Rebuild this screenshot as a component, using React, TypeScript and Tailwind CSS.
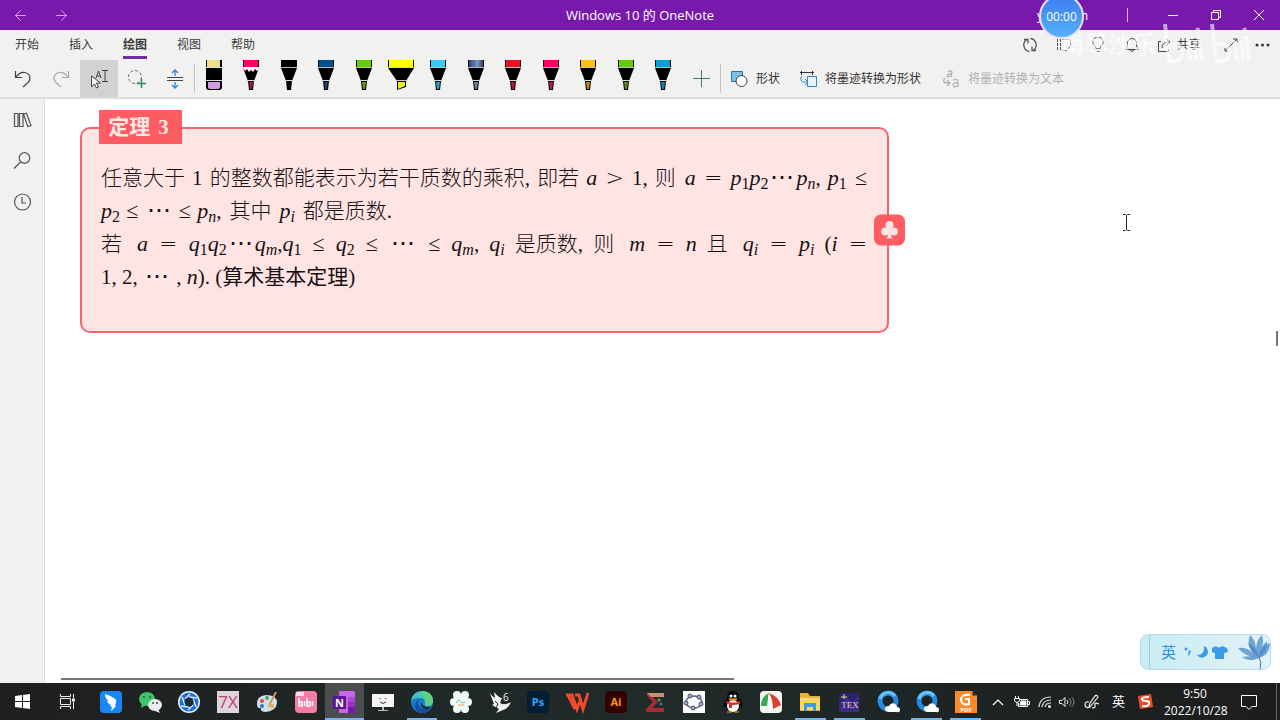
import type { ReactNode } from "react";
import clsx from "clsx";
import { ArrowLeft, ArrowRight } from "lucide-react";

const tabs = ["开始", "插入", "绘图", "视图", "帮助"];

interface Pen {
  name: string;
  color: string;
  tip: string;
  kind?: "eraser" | "pencil" | "highlighter" | "galaxy";
}

const pens: Pen[] = [
  { name: "橡皮擦", color: "#ecdf8c", tip: "#d59ae0", kind: "eraser" },
  { name: "铅笔", color: "#ff0062", tip: "#a5124a", kind: "pencil" },
  { name: "黑色笔", color: "#000000", tip: "#000000" },
  { name: "深蓝色笔", color: "#004e8c", tip: "#1c3f63" },
  { name: "绿色笔", color: "#66cc00", tip: "#5e9c14" },
  { name: "荧光笔", color: "#ffff00", tip: "#e8ec1a", kind: "highlighter" },
  { name: "浅蓝色笔", color: "#33ccff", tip: "#2f9fd0" },
  { name: "星系笔", color: "#4c6496", tip: "#5a8797", kind: "galaxy" },
  { name: "红色笔", color: "#e71224", tip: "#b81230" },
  { name: "粉色笔", color: "#ff0066", tip: "#c01555" },
  { name: "橙色笔", color: "#ffc114", tip: "#b88b18" },
  { name: "草绿色笔", color: "#66cc00", tip: "#5e8c14" },
  { name: "天蓝色笔", color: "#00a0d7", tip: "#167fa8" },
];

const PenIcon = ({ pen }: { pen: Pen }) => {
  if (pen.kind === "eraser") {
    return (
      <svg width="28" height="30" viewBox="0 0 28 30">
        <path d="M6 0h16v27q0 3-3 3H9q-3 0-3-3z" fill="#000" />
        <path d="M7 0h13v7H7z" fill={pen.color} />
        <path d="M6 7h16v1H6zM6 20h16v1H6z" fill="#ddd" />
        <path d="M8 22h12v5q0 2-2 2h-8q-2 0-2-2z" fill={pen.tip} />
      </svg>
    );
  }
  if (pen.kind === "highlighter") {
    return (
      <svg width="28" height="30" viewBox="0 0 28 30">
        <path d="M1 0h26v8l-8 13v6l-9 3v-9L1 8z" fill="#000" />
        <path d="M2 0h24v7H2z" fill={pen.color} />
        <path d="M1 7h26v1H1zM10 20h9v1h-9z" fill="#ccc" />
        <path d="M11 22h7v4l-7 3z" fill={pen.tip} />
      </svg>
    );
  }
  return (
    <svg width="28" height="30" viewBox="0 0 28 30">
      <defs>
        <linearGradient id="galaxy">
          <stop stopColor="#3c3c6c" />
          <stop offset="0.6" stopColor="#6d9cc9" />
          <stop offset="1" stopColor="#39425c" />
        </linearGradient>
      </defs>
      <path d="M6 0h16v8l-5 13-1 9h-4l-1-9L6 8z" fill="#000" />
      <path d="M7 0h14v7H7z" fill={pen.kind === "galaxy" ? "url(#galaxy)" : pen.color} />
      {pen.kind === "pencil" ? (
        <path d="M6 7h16v2l-2 2-2-2-2 3-2-2-2 2-2-3-2 2-2-3z" fill="#fff" />
      ) : (
        <path d="M6 7h16v1H6z" fill="#bbb" />
      )}
      <path d="M11 20h6v1h-6z" fill="#ddd" />
      <path d="M12 22h4l-1 7h-2z" fill={pen.tip} />
    </svg>
  );
};

const ToolButton = ({
  label,
  active,
  children,
}: {
  label: string;
  active?: boolean;
  children: ReactNode;
}) => (
  <button
    aria-label={label}
    className={clsx(
      "flex h-full w-[38px] shrink-0 items-center justify-center",
      active && "bg-[#d2d2d1]",
    )}
  >
    {children}
  </button>
);

const TitleBar = () => (
  <header className="relative grid h-[30px] shrink-0 grid-cols-[1fr_auto_1fr] items-center bg-[#7719aa] text-xs text-white">
    <div className="flex h-full items-center pl-3 text-[#e29bf5]">
      <button aria-label="后退" className="w-[41px]">
        <ArrowLeft size={17} strokeWidth={1.4} />
      </button>
      <button aria-label="前进">
        <ArrowRight size={17} strokeWidth={1.4} />
      </button>
    </div>
    <h1 className="pt-0.5 text-[13px]">Windows 10 的 OneNote</h1>
    <div className="flex h-full items-center justify-end">
      <span className="mr-[39px] flex w-[51px] justify-between pt-0.5">
        <span>y</span>
        <span>n</span>
      </span>
      <span className="mr-[23px] h-[14px] w-px bg-[#d9b3ea]" />
      <button aria-label="最小化" className="flex h-full w-[43px] items-center justify-center">
        <svg width="10" height="10" stroke="#fff">
          <path d="M0 5.5h10" />
        </svg>
      </button>
      <button aria-label="还原" className="flex h-full w-[43px] items-center justify-center">
        <svg width="10" height="10" fill="none" stroke="#fff">
          <path d="M.5 2.5h7v7h-7zM2.5 2.5v-2h7v7h-2" />
        </svg>
      </button>
      <button aria-label="关闭" className="flex h-full w-[43px] items-center justify-center">
        <svg width="10" height="10" stroke="#fff">
          <path d="M0 0l10 10M10 0L0 10" />
        </svg>
      </button>
    </div>
  </header>
);

const RecorderBadge = () => (
  <div className="absolute top-[-6px] right-[196px] z-20 flex size-[45px] items-center justify-center rounded-full border-2 border-[#e5e3fb] bg-linear-to-b from-[#3f7bee] to-[#55b0fa] text-xs text-white">
    00:00
  </div>
);

const Watermark = () => (
  <div className="pointer-events-none absolute top-[20px] right-[28px] z-10 flex items-center gap-1 text-white/60">
    <span className="text-[24px] leading-[48px] font-bold">雨尽沙乐</span>
    <svg width="92" height="46" fill="none" stroke="currentColor" strokeWidth="4">
      <path d="M5 3l4 37q14 2 13-9t-13-7M28 20l2 20M37 7l2 5M39 15l3 25M35 20l1 20" />
      <path d="M52 3l4 37q14 2 13-9t-13-7M75 20l2 20M84 7l2 5M86 15l3 25M82 20l1 20" />
    </svg>
  </div>
);

const RibbonTabs = () => (
  <div className="flex h-[30px] items-center justify-between pr-0.5 text-[#3b3b3b]">
    <nav className="flex h-full gap-[30px] pl-[15px] text-xs">
      {tabs.map((tab) => (
        <a
          key={tab}
          href="#"
          className={clsx(
            "flex h-[29px] items-center border-b-[3px] pt-1",
            tab === "绘图" ? "border-[#7030a0] font-bold" : "border-transparent",
          )}
        >
          {tab}
        </a>
      ))}
    </nav>
    <div className="flex items-center text-xs">
      <button aria-label="同步" className="flex w-[33px] justify-center">
        <svg width="16" height="16" viewBox="0 0 16 16" fill="none" stroke="#555" strokeWidth="1.3">
          <path d="M7.500 14.500A6.500 6.500 0 0 1 4.500 2.800M2 2.500h4v4M8.500 1.500A6.500 6.500 0 0 1 11.500 13.200M14 13.500h-4v-4" />
        </svg>
      </button>
      <button aria-label="笔记本" className="flex w-[34px] justify-center">
        <svg width="16" height="14" viewBox="0 0 16 14" fill="none" stroke="#555">
          <path d="M1.5 1v11M4.5 1v11M6 1.5h8.500V8l-4 4.500H6" strokeDasharray="3 1" />
        </svg>
      </button>
      <button aria-label="操作说明" className="flex w-[34px] justify-center">
        <svg width="14" height="16" viewBox="0 0 14 16" fill="none" stroke="#555">
          <path d="M5 11.500Q5 9.500 3 8a5 5 0 1 1 8 0q-2 1.500-2 3.500zM5.500 14.500h3" />
        </svg>
      </button>
      <button aria-label="通知" className="flex w-[34px] justify-center">
        <svg width="16" height="16" viewBox="0 0 16 16" fill="none" stroke="#444">
          <path d="M1.500 12.500h13L12.500 9V6a4.500 4.500 0 0 0-9 0v3zM6 13q2 3 4 0" />
        </svg>
      </button>
      <button className="mr-[14px] ml-2 flex items-center gap-1">
        <svg width="16" height="15" viewBox="0 0 16 15" fill="none" stroke="#444">
          <path d="M4 3.500H1.500v10h10V11M5 10q0-6 7-6M9 1l4 3-4 4" />
        </svg>
        共享
      </button>
      <button aria-label="全屏" className="flex w-[32px] justify-center">
        <svg width="14" height="14" fill="none" stroke="#444">
          <path d="M1 13L13 1M9 1h4v4M1 10v3h3" />
        </svg>
      </button>
      <button aria-label="更多" className="flex w-[31px] justify-center">
        <svg width="15" height="4" fill="#333">
          <circle cx="2" cy="2" r="1.5" />
          <circle cx="7.5" cy="2" r="1.5" />
          <circle cx="13" cy="2" r="1.5" />
        </svg>
      </button>
    </div>
  </div>
);

const DrawTools = () => (
  <div className="flex h-[37px] items-stretch pl-1 text-xs text-[#333]">
    <ToolButton label="撤消">
      <svg width="18" height="18" viewBox="0 0 18 18" fill="none" stroke="#444" strokeWidth="1.2">
        <path d="M1.500 1v6.500H8M1.500 7.500Q6 1.500 11 2.500q5 1.500 5 6 0 2-2 4L9 17" />
      </svg>
    </ToolButton>
    <ToolButton label="恢复">
      <svg width="18" height="18" viewBox="0 0 18 18" fill="none" stroke="#aaa" strokeWidth="1.2">
        <path d="M16.500 1v6.500H10M16.500 7.500Q12 1.500 7 2.500q-5 1.500-5 6 0 2 2 4L9 17" />
      </svg>
    </ToolButton>
    <ToolButton label="选择对象或键入文本" active>
      <svg width="20" height="20" viewBox="0 0 20 20" fill="none" stroke="#444">
        <path d="M2.500 7v11l3-3 2 4 2-1-2-4h4z" fill="#f4f4f4" />
        <path d="M7 9l2.500-7L12 9M8 7h3.500M13 1.500h6M16 1.500v11M13 12.500h6" />
      </svg>
    </ToolButton>
    <ToolButton label="套索选择">
      <svg width="20" height="20" viewBox="0 0 20 20" fill="none">
        <circle cx="8" cy="8" r="6.5" stroke="#666" strokeDasharray="3 2" />
        <path d="M14.500 10v9M10 14.500h9" stroke="#2f8f5f" strokeWidth="1.5" />
      </svg>
    </ToolButton>
    <ToolButton label="插入空间">
      <svg width="18" height="20" viewBox="0 0 18 20" fill="none">
        <path d="M1 8.500h16M1 11.500h16" stroke="#444" />
        <path d="M9 7V1M6 4l3-3 3 3M9 13v6M6 16l3 3 3-3" stroke="#2b88d8" strokeWidth="1.3" />
      </svg>
    </ToolButton>
    <span className="my-1 w-px shrink-0 bg-[#c6c6c6]" />
    <div className="grid w-[487px] shrink-0 grid-cols-13">
      {pens.map((pen) => (
        <button key={pen.name} aria-label={pen.name} className="flex items-start justify-center">
          <PenIcon pen={pen} />
        </button>
      ))}
    </div>
    <ToolButton label="添加笔">
      <svg width="17" height="17" stroke="#3f7f68">
        <path d="M8.500 0v17M0 8.500h17" />
      </svg>
    </ToolButton>
    <span className="my-1 w-px shrink-0 bg-[#c6c6c6]" />
    <div className="flex shrink-0 items-center gap-[19px] pl-[9px]">
      <button className="flex items-center gap-2">
        <svg width="18" height="18" viewBox="0 0 18 18">
          <path d="M1.500 1.500h11v10h-11z" fill="#83c1ec" stroke="#2476b8" />
          <circle cx="11.5" cy="11" r="5.5" fill="#fff" stroke="#444" />
        </svg>
        形状
      </button>
      <button className="flex items-center gap-2">
        <svg width="18" height="18" viewBox="0 0 18 18" fill="none">
          <path d="M1 2.500h14M2.500 1v4M13.500 1v4" stroke="#333" />
          <path d="M8.500 6.500h9v10h-9z" fill="#eaf4fb" stroke="#2b88d8" />
          <path d="M3 6q-3 4 1 6h4M6 9l3 3-3 3" stroke="#2b88d8" />
        </svg>
        <span className="w-[98px] text-left">将墨迹转换为形状</span>
      </button>
      <button disabled className="flex items-center gap-2 text-[#b2b2b2]">
        <svg width="18" height="18" viewBox="0 0 18 18" fill="none" stroke="#b2b2b2" strokeWidth="1.3">
          <path d="M6 2q4-2 4 0L9 7M9 4Q5 4 5 6t4 0M3 8q-3 4 1 5h3M5 10l3 3-3 3M11 10q5-2 5 2v5M16 13q-5-1-5 2t5 1" />
        </svg>
        将墨迹转换为文本
      </button>
    </div>
  </div>
);

const Sidebar = () => (
  <aside className="flex w-[45px] shrink-0 flex-col items-center gap-[21px] border-r border-[#dedede] bg-[#f1f1f0] pt-[11px]">
    <button aria-label="笔记本导航">
      <svg width="20" height="20" viewBox="0 0 20 20" fill="none" stroke="#555" strokeWidth="1.2">
        <path d="M2.500 3.500h3.500v13H2.500zM7.500 3.500H11v13H7.500zM11.500 4l3-.8 4.500 12.300-3.300 1z" />
      </svg>
    </button>
    <button aria-label="搜索">
      <svg width="20" height="20" viewBox="0 0 20 20" fill="none" stroke="#555" strokeWidth="1.2">
        <circle cx="12.5" cy="7" r="5.3" />
        <path d="M8.500 11L2 17.500" />
      </svg>
    </button>
    <button aria-label="最近的笔记">
      <svg width="20" height="20" viewBox="0 0 20 20" fill="none" stroke="#555" strokeWidth="1.2">
        <circle cx="10.5" cy="10" r="8" />
        <path d="M10 5v6h4" />
      </svg>
    </button>
  </aside>
);

// variable with an optional lower index
const V = ({ v, i, n }: { v: string; i?: string; n?: number }) => (
  <span className="text-[22px]">
    <i>{v}</i>
    {i && <i className="relative top-[4px] text-[16px]">{i}</i>}
    {n && <span className="relative top-[4px] text-[16px]">{n}</span>}
  </span>
);

const Op = ({ children }: { children: ReactNode }) => (
  <span className="px-px font-['DejaVu_Sans'] text-[22px] font-extralight">{children}</span>
);

const Dots = () => (
  <span className="px-0.5 font-['DejaVu_Sans'] text-[24px] font-extralight">⋯</span>
);

// keeps a run of characters at its natural width inside a justified line
const Run = ({ children }: { children: ReactNode }) => (
  <span className="inline-block">{children}</span>
);

const Theorem = () => (
  <section className="relative w-[809px] max-w-full rounded-[10px] border-2 border-[#f9636b] bg-[#ffe4e4] px-[19px] pt-[32px] pb-[38px] font-['Liberation_Serif','Noto_Sans_CJK_SC',serif] text-[21px] font-light text-[#181010]">
    <h2 className="absolute top-[-19px] left-[17px] flex h-[34px] w-[83px] items-center justify-center gap-2 bg-[#ff5b62] pt-0.5 pr-1 font-bold text-[#ffe9e4]">
      <span>定理</span>
      <span>3</span>
    </h2>
    <div className="leading-[33px] whitespace-nowrap *:h-[33px]">
      <p className="[text-align-last:justify]">
        <Run>任意大于</Run> 1 <Run>的整数都能表示为若干质数的乘积,</Run> <Run>即若</Run>{" "}
        <V v="a" /> <Op>&gt;</Op> 1, 则 <V v="a" /> <Op>=</Op> <V v="p" n={1} />
        <V v="p" n={2} />
        <Dots />
        <V v="p" i="n" />, <V v="p" n={1} /> <Op>≤</Op>
      </p>
      <p>
        <V v="p" n={2} /> <Op>≤</Op> <Dots /> <Op>≤</Op> <V v="p" i="n" />,
        <span className="px-2">其中</span>
        <V v="p" i="i" />
        <span className="px-2">都是质数.</span>
      </p>
      <p className="[text-align-last:justify]">
        若 <V v="a" /> <Op>=</Op> <V v="q" n={1} />
        <V v="q" n={2} />
        <Dots />
        <V v="q" i="m" />,<V v="q" n={1} /> <Op>≤</Op> <V v="q" n={2} /> <Op>≤</Op> <Dots />{" "}
        <Op>≤</Op> <V v="q" i="m" />, <V v="q" i="i" /> <Run>是质数,</Run> 则 <V v="m" />{" "}
        <Op>=</Op> <V v="n" /> 且 <V v="q" i="i" /> <Op>=</Op> <V v="p" i="i" /> (<V v="i" />{" "}
        <Op>=</Op>
      </p>
      <p>
        1, 2, <Dots /> , <V v="n" />
        ). (<b>算术基本定理</b>)
      </p>
    </div>
    <span className="absolute top-1/2 right-[-18px] flex size-[31px] -translate-y-1/2 items-center justify-center rounded-[7px] bg-[#ff5b62]">
      <svg width="17" height="19" viewBox="0 0 17 19" fill="#ffe4e4">
        <circle cx="8.5" cy="4.5" r="4" />
        <circle cx="4.2" cy="11" r="4" />
        <circle cx="12.8" cy="11" r="4" />
        <path d="M8 6h1l1 8q0 3 2 4H5q2-1 2-4z" />
      </svg>
    </span>
  </section>
);

const ImeBar = () => (
  <div className="absolute right-[9px] bottom-[13px] flex h-[36px] w-[131px] items-center overflow-hidden rounded-lg border border-[#b4dff0] bg-linear-to-r from-[#c8ecf1] to-[#e2f2f8] text-[#2f8fe4]">
    <span className="mr-[11px] h-full w-[9px] border-r border-[#9ccddd]" />
    <span className="text-[15px]">英</span>
    <svg width="94" height="34" viewBox="0 0 94 34" fill="#399bea">
      <circle cx="10" cy="14" r="1.5" />
      <path d="M13 15l2 1-2 5-1-1zM28 11a6 6 0 1 1-7 9q8 0 7-9zM36 13l4-2q3 3 6 0l5 2 1 4-4 1v6H39v-6l-3-1z" />
      <path
        d="M83 23Q70 23 62 13q9-1 15 5-7-8-3-18 6 5 6 15 0-10 6-15 3 8-2 16 4-7 10-8 0 12-11 15z"
        fill="#6fa4d6"
      />
      <path d="M83 23Q74 17 72 8q8 2 11 15 0-10 8-17 1 10-8 17-10 5-17-1 10-2 17 1z" fill="#4d83bf" opacity="0.7" />
      <path d="M83 22q3 5 1 12" stroke="#407aa8" fill="none" />
    </svg>
  </div>
);

interface TaskbarApp {
  name: string;
  icon: ReactNode;
  running?: boolean;
  active?: boolean;
}

const Tile = ({ fill, children }: { fill: string; children?: ReactNode }) => (
  <>
    <rect x="1" y="1" width="22" height="22" rx="4" fill={fill} />
    {children}
  </>
);

const browserRing = (
  <>
    <circle cx="12" cy="11" r="8" fill="none" stroke="#2589e5" strokeWidth="5" />
    <path d="M4 9a8.500 8.500 0 0 1 15-3" fill="none" stroke="#67c4fa" strokeWidth="3" />
    <path d="M13 22q-4 0-4-3t4-3q2-4 6-2 2 1 2 3 3 0 3 3t-3 2z" fill="#fff" />
  </>
);

const apps: TaskbarApp[] = [
  {
    name: "钉钉",
    icon: (
      <Tile fill="#1687f7">
        <path d="M6 4q9 3 11 6 1 2-1 5l1 1-5 5 1-4-2-1 1-1q-4-2-4-4l2 .5Q6 9 6 4z" fill="#fff" />
      </Tile>
    ),
  },
  {
    name: "微信",
    icon: (
      <>
        <ellipse cx="9" cy="9" rx="8" ry="7" fill="#3dc66b" />
        <path d="M4 13l-1 5 5-3z" fill="#3dc66b" />
        <ellipse cx="17" cy="15" rx="7" ry="6" fill="#e8eceb" />
        <path d="M20 19l2 4-5-2z" fill="#e8eceb" />
        <g fill="#285b3b">
          <circle cx="6" cy="7" r="1" />
          <circle cx="12" cy="7" r="1" />
          <circle cx="15" cy="13" r="1" />
          <circle cx="19" cy="13" r="1" />
        </g>
      </>
    ),
  },
  {
    name: "录屏",
    icon: (
      <>
        <circle cx="12" cy="12" r="11" fill="#eaf4ff" />
        <circle cx="12" cy="12" r="9.5" fill="#1c6fd8" />
        <g stroke="#dceeff" strokeWidth="1.5">
          <path d="M12 7L20 8M16 9l3 8M16 15l-5 5M12 17l-8-1M8 15L5 7M8 9l5-5" />
        </g>
        <circle cx="12" cy="12" r="4.5" fill="#1b2c3a" />
      </>
    ),
  },
  {
    name: "7X",
    icon: (
      <>
        <path d="M1 1h22v22H1z" fill="#ddd5da" />
        <text x="12" y="18" textAnchor="middle" fontSize="17" fill="#c73c78">
          7X
        </text>
      </>
    ),
  },
  {
    name: "画图",
    icon: (
      <>
        <path d="M2 15Q1 6 11 5q11 0 11 8-1 8-11 9-6 0-5-4-3 1-4-3z" fill="#cfe0ea" />
        <circle cx="7" cy="11" r="2" fill="#db4c3f" />
        <circle cx="12" cy="8" r="2" fill="#4ba45c" />
        <circle cx="7" cy="16" r="2" fill="#3079bd" />
        <circle cx="17" cy="16" r="2" fill="#e6ad35" />
        <path d="M22 2l-6 12-3 5 1-6 6-11z" fill="#d79b5c" />
      </>
    ),
  },
  {
    name: "哔哩哔哩",
    icon: (
      <Tile fill="#f57da3">
        <path d="M2 2h8v4H2z" fill="#ffe0ea" />
        <path d="M5 8v8h3v-4H5M10.500 11v5M13 8v8h3v-4h-3M18.500 11v5" stroke="#fff" strokeWidth="1.5" fill="none" />
      </Tile>
    ),
  },
  {
    name: "OneNote",
    active: true,
    running: true,
    icon: (
      <>
        <rect x="7" y="1" width="16" height="22" rx="1" fill="#ca64ea" />
        <path d="M16 7h7v5h-7z" fill="#ae4bd5" />
        <path d="M16 12h7v5h-7z" fill="#9332bf" />
        <path d="M16 17h7v6h-7z" fill="#7719aa" />
        <rect x="1" y="6" width="13" height="13" rx="1" fill="#5b158f" />
        <text x="7.5" y="16.5" textAnchor="middle" fontSize="11" fontWeight="700" fill="#fff">
          N
        </text>
      </>
    ),
  },
  {
    name: "投屏",
    icon: (
      <>
        <path d="M1 4h22v13H1z" fill="#f5f5f5" />
        <path d="M11 17h2v3h4v1H7v-1h4z" fill="#bbb" />
        <path d="M9 8v1M15 8v1M9 12q3 3 6 0" stroke="#333" fill="none" />
      </>
    ),
  },
  {
    name: "Edge",
    running: true,
    icon: (
      <>
        <circle cx="12" cy="12" r="11" fill="#1b79c9" />
        <path d="M1 11Q3 1 12 1q11 1 11 10 0 5-6 5-3-1-2-3 0-5-5-5-7 0-9 3z" fill="#3fc2c0" />
        <path d="M13 1q10 1 10 10 0 5-6 5-3-1-2-3 2-7-5-9z" fill="#60d080" />
        <path d="M8 12q-1 8 13 7-4 4-9 4-7-1-7-7 0-5 5-6z" fill="#1450a0" />
        <path d="M11 12q1 6 10 5-2 3-6 2-5-2-4-7z" fill="#20262a" />
      </>
    ),
  },
  {
    name: "几何",
    icon: (
      <>
        <g fill="#effaf7">
          <circle cx="8" cy="5" r="4" />
          <circle cx="16" cy="5" r="4" />
          <circle cx="5" cy="12" r="4" />
          <circle cx="19" cy="12" r="4" />
          <circle cx="8" cy="19" r="4" />
          <circle cx="16" cy="19" r="4" />
          <circle cx="12" cy="12" r="7" />
        </g>
        <path d="M7 13q3-5 4-2t5 1" stroke="#5db9ad" fill="none" />
        <path d="M9 15h6" stroke="#e69a65" />
      </>
    ),
  },
  {
    name: "Rhino 6",
    icon: (
      <>
        <path d="M1 1q2 5 6 7L6 2q5 6 8 6l-2 5q5 3 11-1-3 7-8 8l-7 3 3-4-7-4 2-1z" fill="#f3f3f3" />
        <path d="M7 11l3 3-2 4" stroke="#222" fill="none" />
        <text x="15" y="11" fontSize="10" fill="#eee">
          6
        </text>
      </>
    ),
  },
  {
    name: "Photoshop",
    icon: (
      <Tile fill="#001e36">
        <text x="12" y="16" textAnchor="middle" fontSize="11" fontWeight="700" fill="#31a8ff">
          Ps
        </text>
      </Tile>
    ),
  },
  {
    name: "WPS",
    icon: (
      <path
        d="M1 5h6l5 14 4-11M3 5l7 14M10 5h4l4 14 5-16"
        fill="none"
        stroke="#f14a2d"
        strokeWidth="3"
      />
    ),
  },
  {
    name: "Illustrator",
    icon: (
      <Tile fill="#330000">
        <text x="12" y="16" textAnchor="middle" fontSize="11" fontWeight="700" fill="#ff9a00">
          Ai
        </text>
      </Tile>
    ),
  },
  {
    name: "MathType",
    icon: (
      <>
        <path d="M4 3h17v4H10l5 5-6 6h12v4H3v-3l7-7-6-6z" fill="#a92c35" />
        <path d="M4 3h17v4H8z" fill="#c79273" />
        <circle cx="16" cy="10" r="1.5" fill="#4caf50" />
        <circle cx="18" cy="14" r="1.5" fill="#3d6fc4" />
      </>
    ),
  },
  {
    name: "GeoGebra",
    icon: (
      <>
        <path d="M1 1h22v22H1z" fill="#fdfdff" />
        <ellipse cx="12" cy="12" rx="8" ry="6" fill="none" stroke="#555b78" strokeWidth="1.5" />
        <g fill="#a5abc8" stroke="#4a4f70">
          <circle cx="8" cy="6" r="2" />
          <circle cx="17" cy="7" r="2" />
          <circle cx="4" cy="13" r="2" />
          <circle cx="19" cy="14" r="2" />
          <circle cx="11" cy="18" r="2" />
        </g>
      </>
    ),
  },
  {
    name: "QQ",
    icon: (
      <>
        <path d="M12 1q6 0 6 7 5 6 3 10l-2-2q-1 6-7 6t-7-6l-2 2q-2-4 3-10 0-7 6-7z" fill="#080808" />
        <ellipse cx="12" cy="16" rx="6" ry="6" fill="#fff" />
        <circle cx="10" cy="6" r="1.5" fill="#fff" />
        <circle cx="14" cy="6" r="1.5" fill="#fff" />
        <path d="M8 9h8l-4 2zM6 22h5M13 22h5" fill="#f4a51d" stroke="#f4a51d" />
        <path d="M5 11q7 3 14 0v3q-4 1-8 1v3H8v-4l-3-1z" fill="#e42b2b" />
      </>
    ),
  },
  {
    name: "录像",
    icon: (
      <Tile fill="#f4f4f2">
        <path d="M2 16Q2 7 10 3L8 16z" fill="#36a853" />
        <path d="M10 3Q7 12 11 20l3-1Q13 10 10 3z" fill="#fff" />
        <path d="M10 3q4 7 4 16l8-4Q19 6 10 3z" fill="#e03e31" />
      </Tile>
    ),
  },
  {
    name: "文件资源管理器",
    running: true,
    icon: (
      <>
        <path d="M2 3h8l2 3h10v15H2z" fill="#e9b12e" />
        <path d="M2 8h20v12H2z" fill="#ffd765" />
        <path d="M6 13h12v8h-3v-4H9v4H6z" fill="#3a9be8" />
      </>
    ),
  },
  {
    name: "TeX",
    running: true,
    icon: (
      <>
        <path d="M2 3h20v19H2z" fill="#29236f" />
        <path d="M2 15l8-8 5 5 7-7v17H2z" fill="#4a3297" opacity="0.6" />
        <path d="M7 4v5M4 7h6" stroke="#d6e878" />
        <text x="13" y="18" textAnchor="middle" fontSize="9" fontFamily="Liberation Serif" fill="#eccda9">
          TEX
        </text>
      </>
    ),
  },
  { name: "浏览器", icon: browserRing },
  { name: "浏览器窗口", icon: browserRing, running: true },
  {
    name: "PDF",
    running: true,
    icon: (
      <>
        <path d="M1 1h17l5 5v17H1z" fill="#fa8b2d" />
        <path d="M18 1v5h5" fill="#20262a" stroke="#fa8b2d" />
        <path d="M16 5q-9-1-9 5 1 6 8 4V9h-4" stroke="#fff" strokeWidth="2" fill="none" />
        <text x="12" y="22" textAnchor="middle" fontSize="6" fontWeight="700" fill="#fff">
          PDF
        </text>
      </>
    ),
  },
];

const Taskbar = () => (
  <footer className="flex h-[37px] shrink-0 items-stretch bg-linear-to-r from-[#1f1f20] via-[#202b2a] to-[#1c1d1e] text-white">
    <button aria-label="开始菜单" className="flex w-[45px] shrink-0 items-center justify-center">
      <svg width="15" height="15" fill="#fff">
        <path d="M0 2l7-1v6H0zM8 1l7-1v7H8zM0 8h7v6l-7-1zM8 8h7v7l-7-1z" />
      </svg>
    </button>
    <button aria-label="任务视图" className="mr-0.5 flex w-[45px] shrink-0 items-center justify-center">
      <svg width="16" height="15" fill="none" stroke="#eee">
        <path d="M.5 0v2.500h10V0M.5 4.500h10v6H.5zM.5 15v-2.500h10V15M13.500 0v4M13.500 8v7" />
        <path d="M12 6h3" strokeWidth="3" />
      </svg>
    </button>
    <div className="grid min-w-0 flex-1 grid-cols-23">
      {apps.map((app) => (
        <button
          key={app.name}
          aria-label={app.name}
          className={clsx(
            "relative flex items-center justify-center",
            app.active && "bg-[#4b4d4f]",
          )}
        >
          <svg width="24" height="24" viewBox="0 0 24 24" className="font-['Open_Sans']">
            {app.icon}
          </svg>
          {app.running && (
            <span
              className={clsx(
                "absolute bottom-0 h-0.5 bg-[#78b4ea]",
                app.active ? "inset-x-0" : "inset-x-1",
              )}
            />
          )}
        </button>
      ))}
    </div>
    <div className="flex shrink-0 items-center text-xs">
      <button aria-label="显示隐藏的图标" className="flex w-[26px] justify-center">
        <svg width="12" height="8" fill="none" stroke="#fff" strokeWidth="1.2">
          <path d="M1 7l5-5 5 5" />
        </svg>
      </button>
      <button aria-label="电池" className="flex w-[22px] justify-center">
        <svg width="16" height="12" fill="none" stroke="#fff">
          <path d="M5.500 3.500h8v7h-9V7M14 5.500h1.500v3H14M1.500 0v2M4.500 0v2M.5 2.500h5V5L3 6.500.5 5zM3 6v4" />
          <path d="M7 5h5v4H6z" fill="#fff" />
        </svg>
      </button>
      <button aria-label="网络" className="flex w-[23px] justify-center">
        <svg width="14" height="14" fill="none" stroke="#ddd" strokeWidth="1.2">
          <path d="M1 12Q2 2 13 2M4 12q1-7 9-7M7 12q1-4 6-4" />
          <circle cx="11.5" cy="11.5" r="1" fill="#fff" />
        </svg>
      </button>
      <button aria-label="音量" className="flex w-[22px] justify-center">
        <svg width="16" height="12" fill="none" stroke="#eee">
          <path d="M.5 4.500H3l3-3v9l-3-3H.5zM8 4q2 2 0 4" />
          <path d="M10 2q4 4 0 8M12.500 1q5 5 0 10" stroke="#888" />
        </svg>
      </button>
      <button aria-label="Windows Ink" className="flex w-[28px] justify-center">
        <svg width="16" height="16" fill="none" stroke="#eee" strokeWidth="1.2">
          <path d="M5 8Q1 7 1 11q1 4 5 2L14 3q-1-3-3-1L6 9l-1 4M8 14q4 0 3-3t4-1" />
        </svg>
      </button>
      <span className="w-[25px] text-center text-[13px]">英</span>
      <button aria-label="搜狗输入法" className="mr-[11px] ml-[7px]">
        <svg width="15" height="15" viewBox="0 0 15 15">
          <path d="M0 2l13-2 2 13-13 2z" fill="#f04d23" />
          <path d="M11 3Q4 3 4 5t4 2 3 3-7 2" fill="none" stroke="#fff" strokeWidth="2" />
        </svg>
      </button>
      <div className="w-[62px] text-center leading-[17px]">
        <div>9:50</div>
        <div>2022/10/28</div>
      </div>
      <button aria-label="通知中心" className="mr-[19px] ml-[15px]">
        <svg width="16" height="16" fill="none" stroke="#fff">
          <path d="M.5 1.500h15v11H11L8 15.500 5 12.500H.5z" />
        </svg>
      </button>
      <span className="mr-[3px] h-[37px] w-px bg-[#66696a]" />
    </div>
  </footer>
);

export default function App() {
  return (
    <div className="relative flex min-h-screen flex-col overflow-hidden bg-white font-['Open_Sans','Noto_Sans_CJK_SC',sans-serif]">
      <TitleBar />
      <div className="shrink-0 border-b-2 border-[#dddddc] bg-[#f1f1f0]">
        <RibbonTabs />
        <DrawTools />
      </div>
      <Watermark />
      <RecorderBadge />
      <div className="relative flex flex-1">
        <Sidebar />
        <main className="relative min-w-0 flex-1 pt-[28px] pl-[35px]">
          <Theorem />
          <svg width="9" height="17" className="absolute top-[115px] right-[149px]" fill="none" stroke="#222">
            <path d="M1 .5h2.500l1 1 1-1H8M4.500 1v15M1 16.500h2.500l1-1 1 1H8" />
          </svg>
          <span className="absolute top-[232px] right-[2px] h-[15px] w-[2px] bg-[#777]" />
          <span className="absolute bottom-[3px] left-[16px] h-[2px] w-[673px] bg-[#777780]" />
        </main>
        <ImeBar />
      </div>
      <Taskbar />
    </div>
  );
}
